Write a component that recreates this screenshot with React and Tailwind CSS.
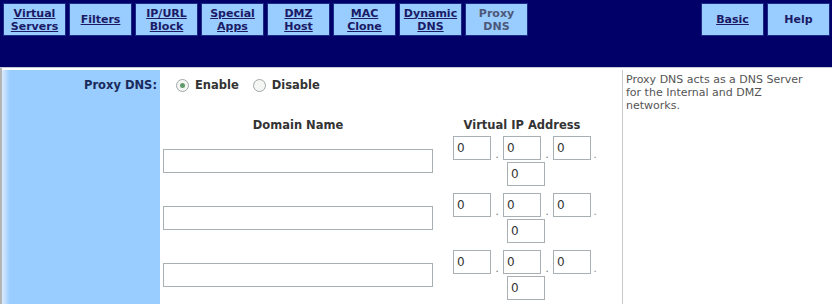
import React from "react";

const tabs = [
  ["Virtual", "Servers"],
  ["Filters"],
  ["IP/URL", "Block"],
  ["Special", "Apps"],
  ["DMZ", "Host"],
  ["MAC", "Clone"],
  ["Dynamic", "DNS"],
];

function Tab({ lines, active, plain }) {
  return (
    <div className="w-[63px] h-[33px] shrink-0 bg-[#99ccff] border border-[#1c2a8a] flex items-center justify-center text-center">
      <span
        className={
          "text-[11px] leading-[13px] font-bold " +
          (active
            ? "text-[#4c5878]"
            : plain
            ? "text-[#1a1a66]"
            : "text-[#1a1a66] underline")
        }
      >
        {lines.map((l, i) => (
          <React.Fragment key={i}>
            {i > 0 && <br />}
            {l}
          </React.Fragment>
        ))}
      </span>
    </div>
  );
}

function Radio({ checked }) {
  return (
    <span className="w-[13px] h-[13px] rounded-full border border-[#a0a8a8] bg-[#f4f6f4] flex items-center justify-center shrink-0">
      {checked && <span className="w-[5px] h-[5px] rounded-full bg-[#5f9a6a]" />}
    </span>
  );
}

function Box({ w, val }) {
  return (
    <div
      className={
        "h-[24px] border border-[#a9b0b4] bg-white text-[12px] leading-[22px] pl-[3px] text-[#333] shrink-0 " +
        w
      }
    >
      {val}
    </div>
  );
}

function Row() {
  return (
    <div className="flex items-center h-[51px]">
      <div className="w-[276px] flex justify-center">
        <Box w="w-[270px]" val="" />
      </div>
      <div className="w-[180px] flex flex-col items-center gap-[2px]">
        <div className="flex items-end">
          <Box w="w-[38px]" val="0" />
          <span className="w-[12px] text-center text-[10px] leading-[10px] text-[#666]">.</span>
          <Box w="w-[38px]" val="0" />
          <span className="w-[12px] text-center text-[10px] leading-[10px] text-[#666]">.</span>
          <Box w="w-[38px]" val="0" />
          <span className="w-[8px] text-center text-[10px] leading-[10px] text-[#888]">.</span>
        </div>
        <div className="flex">
          <Box w="w-[38px]" val="0" />
        </div>
      </div>
    </div>
  );
}

export default function App() {
  return (
    <div
      className="w-[832px] h-[304px] overflow-hidden bg-white flex flex-col"
      style={{ fontFamily: '"DejaVu Sans", Verdana, sans-serif' }}
    >
      <div className="h-[67px] shrink-0 bg-[#000068] flex items-start pt-[3px] pl-[3px] pr-[2px] gap-[3px]">
        {tabs.map((t, i) => (
          <Tab key={i} lines={t} />
        ))}
        <Tab lines={["Proxy", "DNS"]} active />
        <div className="flex-1" />
        <Tab lines={["Basic"]} />
        <Tab lines={["Help"]} plain />
      </div>
      <div className="h-[1px] bg-[#c4c8d0] shrink-0" />
      <div className="flex flex-1 pt-[2px] border-l-[2px] border-[#b4b4b4]">
        <div className="w-[158px] shrink-0 bg-linear-to-r from-[#dcebfb] from-0% to-[#99ccff] to-[5%] flex justify-end pr-[3px] pt-[8px]">
          <span className="text-[11.5px] leading-[14px] font-bold text-[#1a2a5a]">Proxy DNS:</span>
        </div>
        <div className="w-[462px] shrink-0 flex flex-col">
          <div className="flex items-center gap-[6px] pl-[16px] pt-[4px] h-[22px] box-content">
            <Radio checked />
            <span className="text-[11.5px] leading-[14px] font-bold text-[#333]">Enable</span>
            <span className="w-[2px]" />
            <Radio />
            <span className="text-[11.5px] leading-[14px] font-bold text-[#333]">Disable</span>
          </div>
          <div className="flex mt-[22px] h-[14px] items-center">
            <div className="w-[276px] text-center text-[11.5px] leading-[14px] font-bold text-[#333]">Domain Name</div>
            <div className="w-[172px] text-center text-[11.5px] leading-[14px] font-bold text-[#333]">Virtual IP Address</div>
          </div>
          <div className="flex flex-col gap-[6px] mt-[3px]">
            <Row />
            <Row />
            <Row />
          </div>
        </div>
        <div className="flex-1 border-l border-[#c8c8c8] pl-[3px] pt-[3px]">
          <p className="text-[11px] leading-[13px] text-[#555] whitespace-nowrap">
            Proxy DNS acts as a DNS Server
            <br />
            for the Internal and DMZ
            <br />
            networks.
          </p>
        </div>
      </div>
    </div>
  );
}
